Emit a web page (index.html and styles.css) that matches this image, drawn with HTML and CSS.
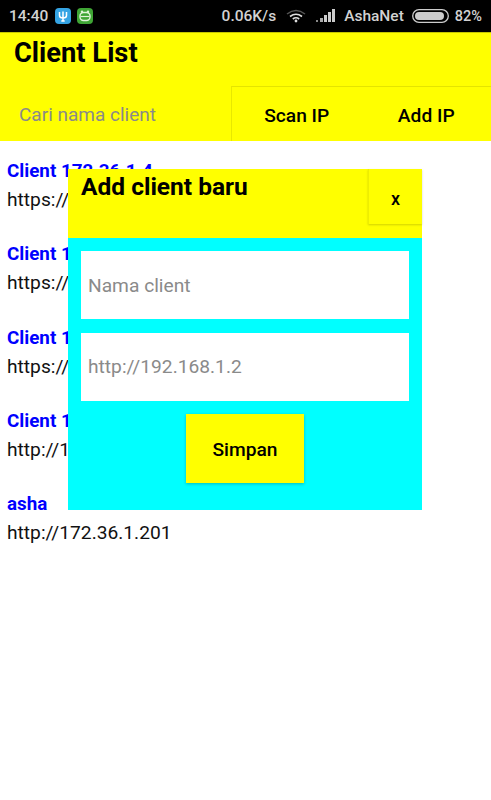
FILE: index.html
```html
<!DOCTYPE html>
<html lang="en">

<head>
    <meta charset="UTF-8">
    <meta name="viewport" content="width=device-width, initial-scale=1.0">
    <title>Client List</title>

    <link rel="stylesheet" href="styles.css">
</head>

<body>
    <div class="statusbar">
        <span class="clock">14:40</span>
        <svg class="noticon" width="16" height="16" viewBox="0 0 16 16">
            <rect width="16" height="16" rx="4" fill="#35a4e4"/>
            <path d="M4.5 4v3.5q0 2.5 3.5 2.5t3.5-2.5V4M8 3.5V13M6.3 13h3.4" fill="none" stroke="#fff" stroke-width="1.5"/>
        </svg>
        <svg class="noticon" width="16" height="16" viewBox="0 0 16 16">
            <rect width="16" height="16" rx="4" fill="#3fa535"/>
            <rect x="3" y="4.5" width="10" height="8" rx="3.5" fill="none" stroke="#dff3d8" stroke-width="1.4"/>
            <circle cx="5" cy="3.8" r="1.2" fill="#dff3d8"/>
            <circle cx="11" cy="3.8" r="1.2" fill="#dff3d8"/>
            <path d="M3.5 8.5h9" stroke="#dff3d8" stroke-width="1.2"/>
        </svg>
        <span class="spacer"></span>
        <span class="speed">0.06K/s</span>
        <svg class="wifi" width="20" height="14" viewBox="0 0 20 14">
            <path d="M1 5q9-7 18 0" fill="none" stroke="#555" stroke-width="1.5"/>
            <path d="M4 7.5q6-4.5 12 0M6.8 10q3.2-2.4 6.4 0" fill="none" stroke="#ddd" stroke-width="1.6"/>
            <circle cx="10" cy="12" r="1.4" fill="#ddd"/>
        </svg>
        <svg class="signal" width="20" height="14" viewBox="0 0 20 14">
            <rect x="0" y="11" width="2" height="2" fill="#888"/>
            <rect x="4" y="9" width="3" height="4" fill="#aaa"/>
            <rect x="8" y="6" width="3" height="7" fill="#ccc"/>
            <rect x="12" y="3" width="3" height="10" fill="#ccc"/>
            <rect x="16" y="0" width="3" height="13" fill="#ccc"/>
        </svg>
        <span class="carrier">AshaNet</span>
        <svg class="battery" width="37" height="14" viewBox="0 0 37 14">
            <rect x="0.7" y="0.7" width="35.6" height="12.6" rx="6.3" fill="none" stroke="#ccc" stroke-width="1.3"/>
            <rect x="3" y="3" width="29" height="8" rx="4" fill="#ccc"/>
        </svg>
        <span class="percent">82%</span>
    </div>

    <div class="header">
        <h1 class="title">Client List</h1>
        <div class="toolbar">
            <input class="search" type="text" placeholder="Cari nama client">
            <button class="toolbtn">Scan IP</button>
            <button class="toolbtn">Add IP</button>
        </div>
    </div>

    <div class="list">
        <div class="client">
            <div class="name">Client 172.36.1.4</div>
            <div class="url">https://172.36.1.4</div>
        </div>
        <div class="client">
            <div class="name">Client 172.36.1.5</div>
            <div class="url">https://172.36.1.5</div>
        </div>
        <div class="client">
            <div class="name">Client 172.36.1.6</div>
            <div class="url">https://172.36.1.6</div>
        </div>
        <div class="client">
            <div class="name">Client 172.36.1.7</div>
            <div class="url">http://172.36.1.7</div>
        </div>
        <div class="client">
            <div class="name">asha</div>
            <div class="url">http://172.36.1.201</div>
        </div>
    </div>

    <div class="modal">
        <div class="modal_head">
            <h2 class="modal_title">Add client baru</h2>
            <button class="close">x</button>
        </div>
        <div class="modal_body">
            <input class="field" type="text" placeholder="Nama client">
            <input class="field" type="text" placeholder="http://192.168.1.2">
            <button class="save">Simpan</button>
        </div>
    </div>
</body>

</html>
```

FILE: styles.css
```css
* {
    font-family: Roboto, sans-serif;
    box-sizing: border-box;
}

body {
    margin: 0;
    height: 800px;
    background-color: #fff;
    overflow: hidden;
}

/* status bar */

.statusbar {
    height: 33px;
    background-color: #000;
    border-bottom: 1px solid #c8c800;
    display: flex;
    align-items: center;
    padding: 0 9px;
    color: #d2d2d2;
    font-size: 15.5px;
    font-weight: 500;
}

.clock {
    margin-right: 7px;
}

.noticon {
    margin-right: 6px;
}

.spacer {
    flex: 1;
}

.speed {
    margin-right: 10px;
}

.wifi {
    margin-right: 10px;
}

.signal {
    margin-right: 8px;
}

.carrier {
    margin-right: 8px;
}

.battery {
    margin-right: 6px;
}

.percent {
    font-size: 14.5px;
}

/* header */

.header {
    height: 108px;
    background-color: #ff0;
    display: flex;
    flex-direction: column;
}

.title {
    margin: 0;
    padding: 4px 14px 0;
    height: 53px;
    font-size: 27.3px;
    line-height: 32px;
    font-weight: 700;
    color: #000;
}

.toolbar {
    height: 55px;
    display: flex;
}

.search {
    width: 231px;
    height: 100%;
    border: none;
    outline: none;
    background: transparent;
    padding: 2px 0 0 19px;
    font-size: 19px;
}

.search::placeholder {
    color: #8a8a8a;
}

.toolbtn {
    flex: 1;
    height: 100%;
    background-color: #ff0;
    border: none;
    border-top: 1px solid #e4e400;
    border-left: 1px solid #e8e800;
    padding: 2px 0 0;
    font-size: 19.2px;
    font-weight: 500;
    color: #000;
}

.toolbtn:last-child {
    border-left: none;
}

/* list */

.list {
    padding-top: 17px;
}

.client {
    height: 83.25px;
    padding-left: 7px;
}

.name {
    height: 28px;
    line-height: 27px;
    font-size: 18.8px;
    font-weight: 700;
    color: #00f;
}

.url {
    line-height: 27px;
    font-size: 19.2px;
    color: #111;
}

/* add client dialog */

.modal {
    position: absolute;
    left: 68px;
    top: 169px;
    width: 354px;
    height: 341px;
    background-color: #0ff;
    display: flex;
    flex-direction: column;
}

.modal_head {
    height: 69px;
    background-color: #ff0;
    display: flex;
    justify-content: space-between;
    align-items: flex-start;
}

.modal_title {
    margin: 0;
    padding: 3px 0 0 13px;
    font-size: 24.5px;
    line-height: 30px;
    font-weight: 700;
    color: #000;
}

.close {
    width: 54px;
    height: 55px;
    background-color: #ff0;
    border: none;
    border-left: 1px solid #eeee00;
    box-shadow: 0 1px 2px rgba(0, 0, 0, 0.18);
    padding: 4px 0 0;
    font-size: 18px;
    font-weight: 500;
    color: #000;
}

.modal_body {
    flex: 1;
    padding: 13px 13px 0;
    display: flex;
    flex-direction: column;
    align-items: center;
}

.field {
    width: 100%;
    height: 68px;
    border: none;
    outline: none;
    background-color: #fff;
    margin-bottom: 13.5px;
    padding: 0 7px;
    font-size: 19.2px;
}

.field::placeholder {
    color: #8a8a8a;
}

.save {
    width: 118px;
    height: 69px;
    background-color: #ff0;
    border: none;
    box-shadow: 0 1px 3px rgba(0, 0, 0, 0.25);
    padding: 2px 0 0;
    font-size: 19.2px;
    font-weight: 500;
    color: #000;
}
```
